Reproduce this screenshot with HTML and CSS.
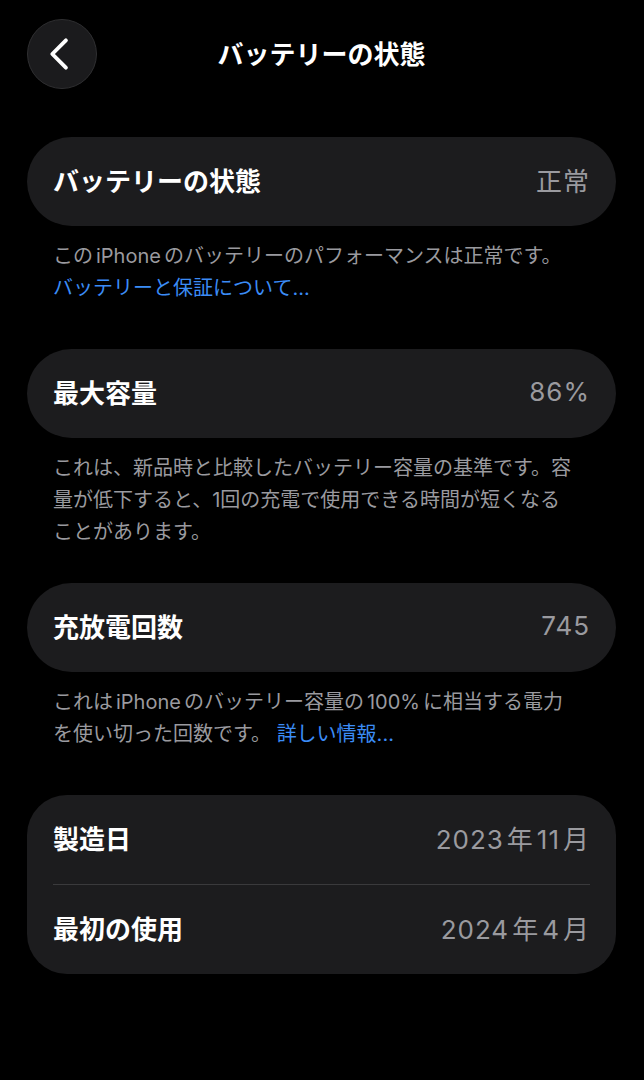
FILE: index.html
```html
<!DOCTYPE html>
<html lang="ja">
<head>
<meta charset="utf-8">
<title>バッテリーの状態</title>
<link rel="stylesheet" href="styles.css">
</head>
<body>
<div class="page">
  <header class="nav">
    <button class="back" aria-label="戻る">
      <svg width="70" height="70" viewBox="0 0 70 70"><polyline points="39,21 25,35 39,49" fill="none" stroke="#ffffff" stroke-width="4" stroke-linecap="round" stroke-linejoin="round"/></svg>
    </button>
    <h1 class="title">バッテリーの状態</h1>
    <span class="spacer"></span>
  </header>

  <section class="group group-first">
    <div class="card">
      <div class="row"><span class="label">バッテリーの状態</span><span class="value">正常</span></div>
    </div>
    <p class="note">この<span class="latin">iPhone</span>のバッテリーのパフォーマンスは正常です。<br><a class="link" href="#">バッテリーと保証について...</a></p>
  </section>

  <section class="group">
    <div class="card">
      <div class="row"><span class="label">最大容量</span><span class="value">86%</span></div>
    </div>
    <p class="note">これは、新品時と比較したバッテリー容量の基準です。容<br>量が低下すると、1回の充電で使用できる時間が短くなる<br>ことがあります。</p>
  </section>

  <section class="group group-tight">
    <div class="card">
      <div class="row"><span class="label">充放電回数</span><span class="value">745</span></div>
    </div>
    <p class="note">これは<span class="latin">iPhone</span>のバッテリー容量の<span class="latin">100%</span>に相当する電力<br>を使い切った回数です。 <a class="link" href="#">詳しい情報...</a></p>
  </section>

  <section class="group">
    <div class="card card-list">
      <div class="row"><span class="label">製造日</span><span class="value">2023<span class="unit">年</span>11<span class="unit unit-end">月</span></span></div>
      <div class="divider"></div>
      <div class="row"><span class="label">最初の使用</span><span class="value">2024<span class="unit">年</span>4<span class="unit unit-end">月</span></span></div>
    </div>
  </section>
</div>
</body>
</html>
```
FILE: styles.css
```css
html, body {
  margin: 0;
  padding: 0;
  background: #000000;
}

body {
  font-family: "Inter", "Noto Sans CJK JP", sans-serif;
  color: #ffffff;
  -webkit-font-smoothing: antialiased;
}

.page {
  width: 644px;
  box-sizing: border-box;
  padding: 19px 28px 0 27px;
}

.nav {
  display: grid;
  grid-template-columns: 70px 1fr 70px;
  align-items: center;
  height: 70px;
}

.back {
  width: 70px;
  height: 70px;
  padding: 0;
  border-radius: 50%;
  border: 1px solid #2f2f31;
  background: #1b1b1d;
  display: flex;
  align-items: center;
  justify-content: center;
  box-sizing: border-box;
}

.back svg {
  display: block;
}

.title {
  margin: 0 0 3px;
  text-align: center;
  font-size: 26px;
  font-weight: 700;
  color: #ffffff;
}

.group {
  margin-top: 45px;
}

.group-first {
  margin-top: 48px;
}

.group-tight {
  margin-top: 35px;
}

.card {
  background: #1c1c1e;
  border-radius: 45px;
}

.card-list {
  border-radius: 40px;
}

.row {
  height: 89px;
  box-sizing: border-box;
  display: flex;
  align-items: center;
  justify-content: space-between;
  padding: 0 27px 4px 26px;
}

.label {
  font-size: 26px;
  font-weight: 700;
  color: #ffffff;
}

.value {
  font-size: 26px;
  font-weight: 400;
  color: #9a9a9f;
  letter-spacing: 1px;
  margin-right: -1px;
}

.unit {
  margin: 0 3px;
}

.unit-end {
  margin-right: 0;
}

.divider {
  height: 1px;
  background: #3a3a3c;
  margin: 0 26px;
}

.note {
  margin: 14px 0 0;
  padding: 0 26px;
  font-size: 20px;
  line-height: 32px;
  color: #9a9a9f;
}

.latin {
  margin: 0 3px;
}

.link {
  color: #3b8cf6;
  text-decoration: none;
}
```
